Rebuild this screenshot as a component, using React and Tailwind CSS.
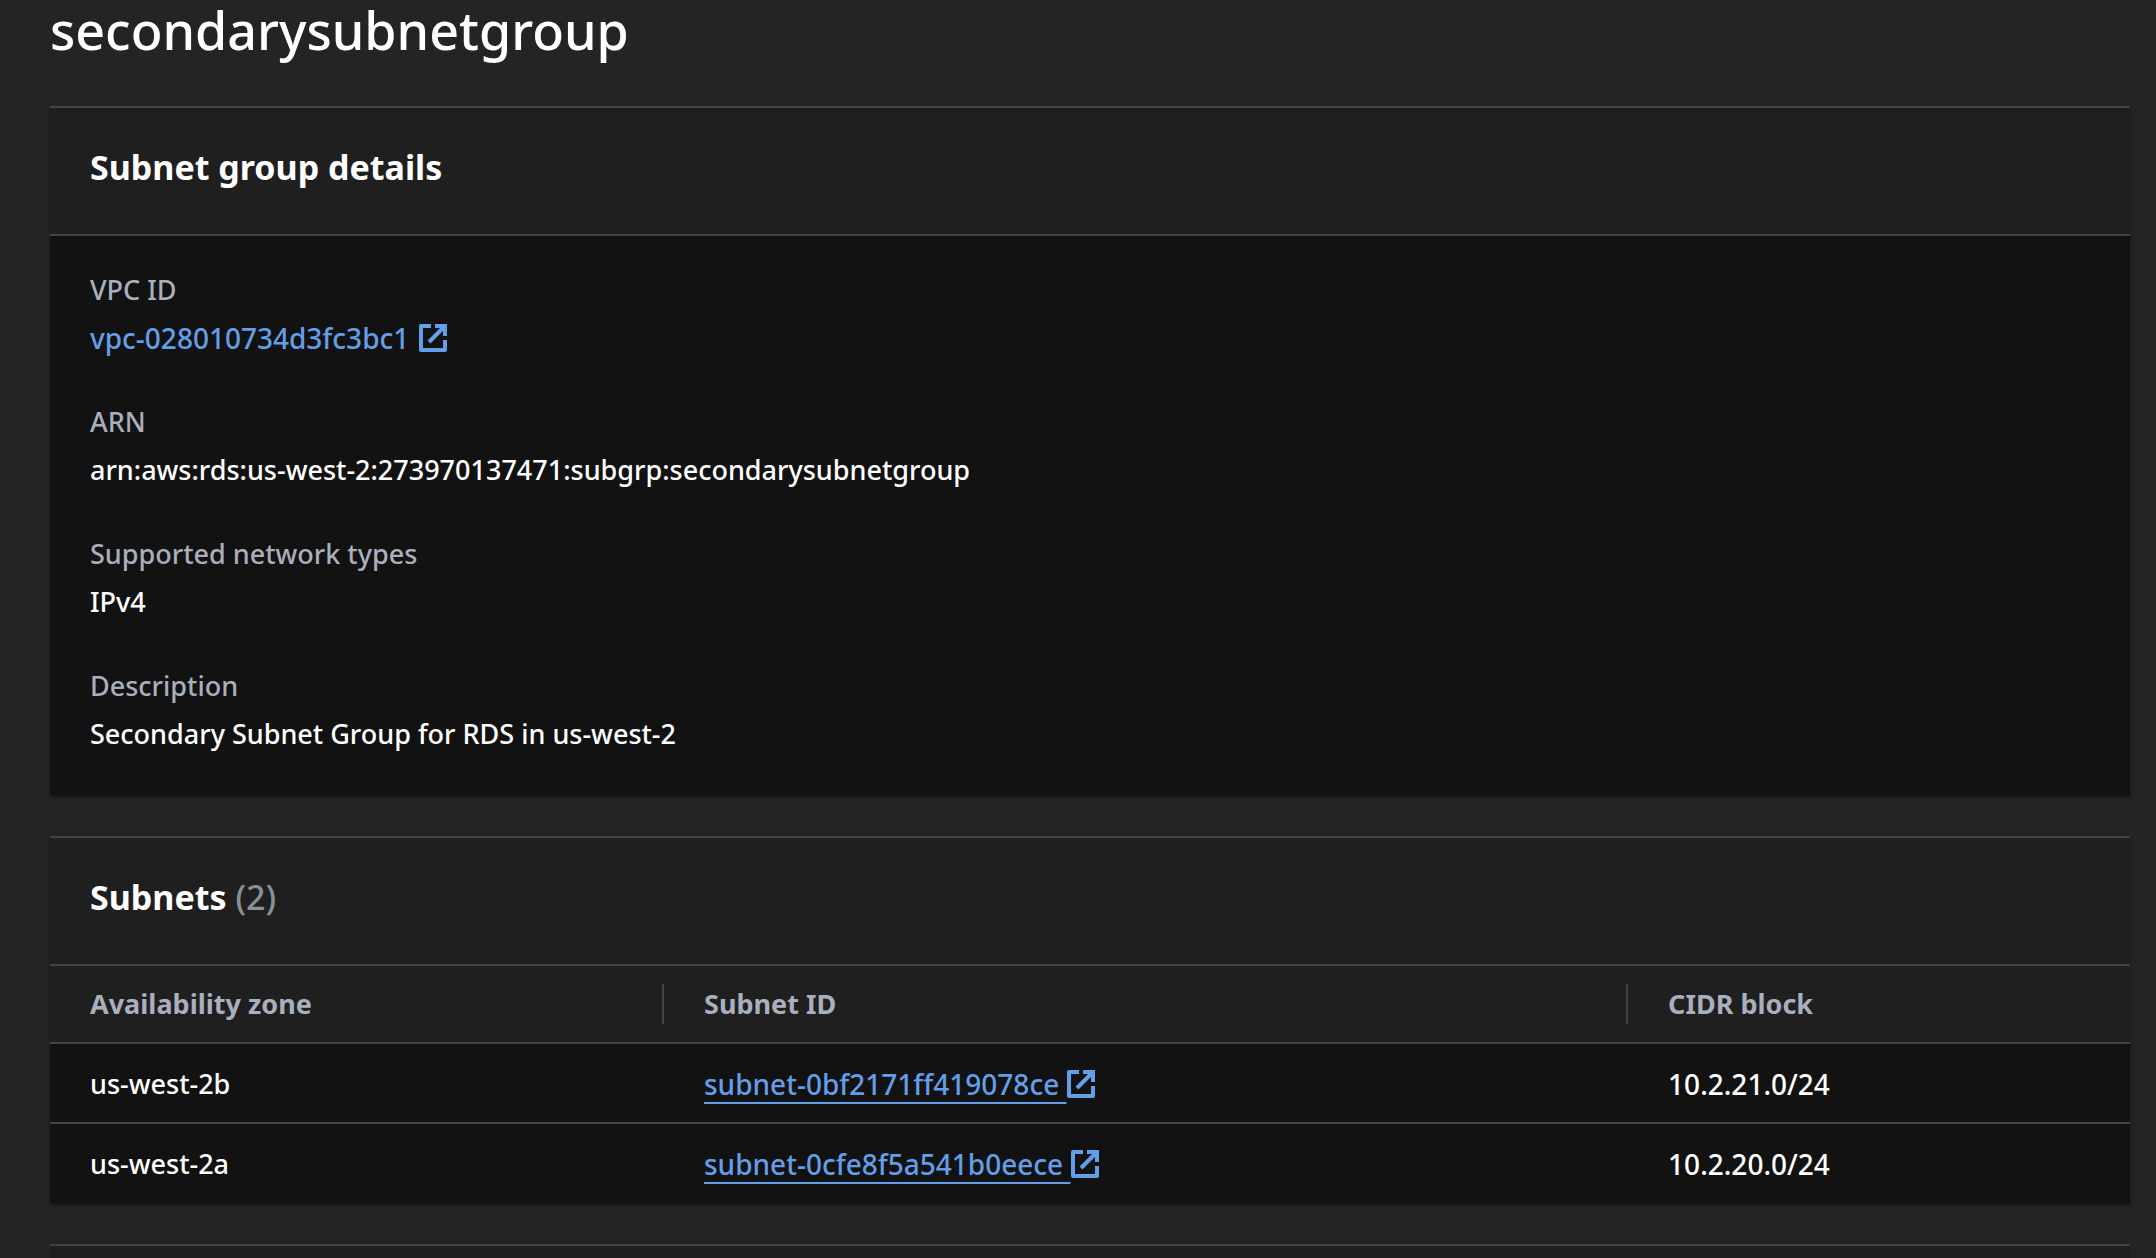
const subnets = [
  { zone: "us-west-2b", id: "subnet-0bf2171ff419078ce", cidr: "10.2.21.0/24" },
  { zone: "us-west-2a", id: "subnet-0cfe8f5a541b0eece", cidr: "10.2.20.0/24" },
];

function ExternalIcon() {
  return (
    <svg
      viewBox="0 0 28 28"
      className="inline-block size-7 shrink-0 fill-none stroke-current stroke-4"
      strokeLinejoin="round"
      aria-hidden="true"
    >
      <path d="M12 2H2v24h24V16" />
      <path d="M16 2h10v10" strokeLinejoin="miter" />
      <path d="M10 18 25 3" />
    </svg>
  );
}

function Panel({ title, count, children }) {
  return (
    <section className="border-t-2 border-[#444444] bg-[#121212] shadow-[0_2px_2px_rgba(0,28,36,0.3),2px_2px_2px_rgba(0,28,36,0.15),-2px_2px_2px_rgba(0,28,36,0.15)]">
      <h2 className="border-b-2 border-[#444444] bg-[#1f1f1f] px-10 pt-9 pb-11 text-[34px] leading-[46px] font-bold">
        {title}
        {count && <span className="font-medium text-[#879196]"> {count}</span>}
      </h2>
      {children}
    </section>
  );
}

function Field({ label, children }) {
  return (
    <div className="flex flex-col gap-1">
      <dt className="text-[#a9afbc]">{label}</dt>
      <dd>{children}</dd>
    </div>
  );
}

function HeaderCell({ children, className = "", divider = true }) {
  return (
    <th scope="col" className={"p-0 text-left font-bold text-[#a9afbc] " + className}>
      <div className="flex items-center justify-between py-4 pl-10">
        {children}
        {divider && <span className="h-10 w-0.5 bg-[#444444]" />}
      </div>
    </th>
  );
}

export default function App() {
  return (
    <main className="h-screen overflow-hidden bg-[#242424] pr-[26px] pl-[50px] font-['Noto_Sans','Open_Sans',sans-serif] text-[27px] leading-11 font-medium text-white">
      <h1 className="pb-[46px] text-[52px] leading-[60px] font-medium">secondarysubnetgroup</h1>
      <div className="flex flex-col gap-10">
        <Panel title="Subnet group details">
          <dl className="flex flex-col gap-10 px-10 pt-8 pb-10">
            <Field label="VPC ID">
              <a href="#vpc" className="flex w-fit items-center gap-2.5 text-[28px] text-[#639fe8]">
                vpc-028010734d3fc3bc1
                <ExternalIcon />
              </a>
            </Field>
            <Field label="ARN">arn:aws:rds:us-west-2:273970137471:subgrp:secondarysubnetgroup</Field>
            <Field label="Supported network types">IPv4</Field>
            <Field label="Description">Secondary Subnet Group for RDS in us-west-2</Field>
          </dl>
        </Panel>

        <Panel title="Subnets" count="(2)">
          <table className="w-full table-fixed border-separate border-spacing-0">
            <thead className="bg-[#1f1f1f]">
              <tr className="*:border-b-2 *:border-[#444444]">
                <HeaderCell className="w-[29.52%]">Availability zone</HeaderCell>
                <HeaderCell className="w-[46.35%]">Subnet ID</HeaderCell>
                <HeaderCell divider={false}>CIDR block</HeaderCell>
              </tr>
            </thead>
            <tbody>
              {subnets.map((s) => (
                <tr
                  key={s.id}
                  className="*:border-b-2 *:border-[#444444] *:px-10 *:pt-[18px] *:pb-4 *:align-top last:*:border-transparent"
                >
                  <td>{s.zone}</td>
                  <td>
                    <a href={"#" + s.id} className="flex w-fit items-center gap-px text-[#639fe8]">
                      <span className="text-[28px] whitespace-pre underline decoration-2 underline-offset-[7px]">
                        {s.id + " "}
                      </span>
                      <ExternalIcon />
                    </a>
                  </td>
                  <td className="text-[28px]">{s.cidr}</td>
                </tr>
              ))}
            </tbody>
          </table>
        </Panel>

        <section className="h-20 shrink-0 border-t-2 border-[#444444] bg-[#1f1f1f]" />
      </div>
    </main>
  );
}
